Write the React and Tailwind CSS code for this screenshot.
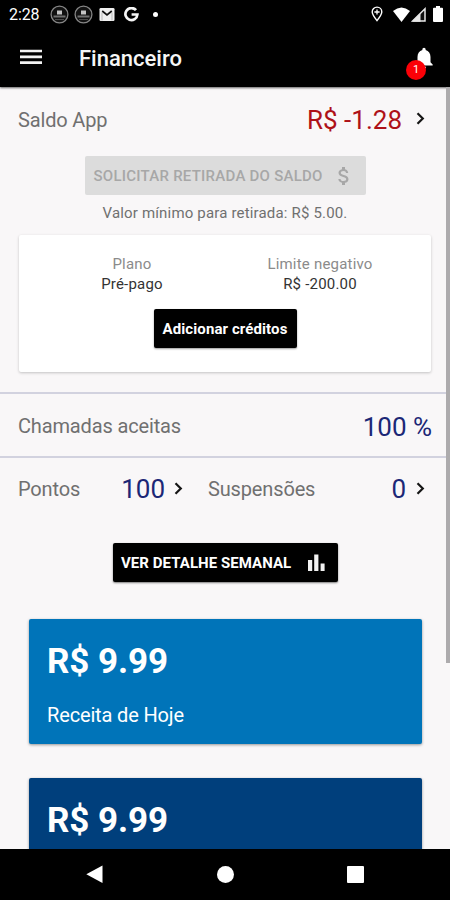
import React from 'react';
import { MdNotifications, MdAttachMoney } from 'react-icons/md';

const earnings = [
    { value: 'R$ 9.99', label: 'Receita de Hoje', color: 'bg-[#0074b9]' },
    { value: 'R$ 9.99', color: 'bg-[#003f7c]' },
];

const Chevron = () => (
    <svg className="w-[9px] h-[13px] shrink-0 -mt-[2px]" viewBox="0 0 9 13" fill="none" stroke="#161616" strokeWidth="2.2">
        <path d="M1.5 1.2 L6.8 6.5 L1.5 11.8" />
    </svg>
);

const AppBadge = () => (
    <svg className="w-[19px] h-[19px]" viewBox="0 0 19 19">
        <circle cx="9.5" cy="9.5" r="8.4" fill="#111" stroke="#858585" strokeWidth="1.3" />
        <path d="M7 5.5h5v4H7z" fill="#c4c4c4" />
        <path d="M3.5 10.5h12v2h-12z" fill="#707070" />
        <path d="M5 14.5h9" stroke="#4a4a4a" strokeWidth="1" />
    </svg>
);

const StatusBar = () => (
    <div className="h-7 flex items-center justify-between pl-[9px] pr-[7px] text-white">
        <div className="flex items-center">
            <span className="w-[41px] pt-[1px] text-[16px] leading-7 tracking-[-0.1px]">2:28</span>
            <div className="flex items-center gap-[5px]">
                <AppBadge />
                <AppBadge />
            </div>
            <svg className="ml-[6px] w-[16px] h-[13px]" viewBox="0 0 16 13">
                <rect x="0.5" width="15" height="13" rx="1.3" fill="#f0f0f0" />
                <path d="M3.2 3 L8 7 L12.8 3" fill="none" stroke="#111" strokeWidth="1.7" />
                <path d="M3 4.5v8M13 4.5v8" stroke="#aaa" strokeWidth="0.8" />
            </svg>
            <svg className="ml-[9px] w-[15px] h-[15px]" viewBox="0 0 15 15" fill="none" stroke="#f5f5f5" strokeWidth="2.7">
                <path d="M12 3.2 A6 6 0 1 0 13.4 7.5 H7.6" />
            </svg>
            <span className="ml-[14px] w-[5px] h-[5px] rounded-full bg-white" />
        </div>
        <div className="flex items-center">
            <svg className="w-[12px] h-[16px]" viewBox="0 0 12 16" fill="none" stroke="#fff">
                <path d="M6 14.6 C3.4 11.2 1.2 8.3 1.2 5.9 a4.8 4.8 0 0 1 9.6 0 C10.8 8.3 8.6 11.2 6 14.6z" strokeWidth="1.4" />
                <path d="M6 3.4v5.2M3.4 6h5.2" strokeWidth="1.3" />
            </svg>
            <svg className="ml-[10px] w-[17px] h-[15px]" viewBox="0 0 17 15" fill="#fff">
                <path d="M0 4 Q8.5 -3 17 4 L8.5 15z" />
            </svg>
            <svg className="ml-[1px] w-[15px] h-[15px]" viewBox="0 0 15 15">
                <path d="M1.6 14 L14 1.8 V14z" fill="#111" stroke="#e8e8e8" strokeWidth="1.5" />
                <path d="M1 14.7 L9.5 6.3 V14.7z" fill="#e8e8e8" />
            </svg>
            <svg className="ml-[7px] w-[10px] h-[16px]" viewBox="0 0 10 16" fill="#fff">
                <path d="M3 0h4v1.7h2a1 1 0 0 1 1 1V15a1 1 0 0 1-1 1H1a1 1 0 0 1-1-1V2.7a1 1 0 0 1 1-1h2z" />
            </svg>
        </div>
    </div>
);

const App = () => {
    return (
        <div className="relative w-[450px] h-[900px] flex flex-col overflow-hidden bg-[#f9f7f8] font-['Roboto',sans-serif] text-[#707070]">
            {/* Header */}
            <header className="h-[87px] shrink-0 bg-black shadow-[0_1px_2px_rgba(0,0,0,0.6)]">
                <StatusBar />
                <div className="h-[59px] flex items-center pl-[20px] pr-[13px]">
                    <svg className="w-[22px] h-[16px] -mt-[2px]" viewBox="0 0 22 16" stroke="#f2f2f2" strokeWidth="2.7">
                        <path d="M0 2h22M0 7.8h22M0 13.6h22" />
                    </svg>
                    <h1 className="ml-[37px] mt-[2px] text-[22px] leading-[26px] font-medium text-[#f6f6f6]">Financeiro</h1>
                    <div className="relative ml-auto">
                        <MdNotifications className="w-[26px] h-[26px] text-white" />
                        <span className="absolute -left-[5px] top-[15px] w-[20px] h-[20px] rounded-full bg-[#fb0007] text-white text-[11px] leading-[20px] text-center">1</span>
                    </div>
                </div>
            </header>

            <main className="flex-1 min-h-0 overflow-hidden">
                {/* Balance */}
                <section className="h-[307px] border-b-2 border-[#d2d2df]">
                    <div className="h-[65px] flex items-center pl-[18px] pr-[25px]">
                        <span className="text-[20px] tracking-[-0.15px]">Saldo App</span>
                        <span className="ml-auto mr-[14px] pt-[2px] text-[26px] text-[#ae1118]">R$ -1.28</span>
                        <Chevron />
                    </div>
                    <div className="flex flex-col items-center">
                        <button className="mt-[4px] w-[281px] h-[39px] flex items-center pl-[9px] pt-[2px] rounded-[2px] bg-[#dcdcdc] text-[#a7a7a7] text-[15px] font-medium tracking-[0.25px]">
                            SOLICITAR RETIRADA DO SALDO
                            <MdAttachMoney className="-mt-[2px] ml-[9px] w-[24px] h-[24px]" />
                        </button>
                        <p className="mt-[8px] text-[15px] leading-[20px] tracking-[0.17px]">Valor mínimo para retirada: R$ 5.00.</p>
                    </div>
                    <div className="mx-[19px] mt-[12px] h-[137px] bg-white rounded-[2px] shadow-[0_1px_3px_rgba(0,0,0,0.22)] flex flex-col items-center">
                        <div className="w-full pt-[19px] pl-[19px] pr-[17px] grid grid-cols-2 text-center text-[15px] leading-[20px] tracking-[0.2px]">
                            <div>
                                <p className="text-[#8b8b8b]">Plano</p>
                                <p className="text-[#333]">Pré-pago</p>
                            </div>
                            <div>
                                <p className="text-[#8b8b8b]">Limite negativo</p>
                                <p className="text-[#333]">R$ -200.00</p>
                            </div>
                        </div>
                        <button className="mt-[15px] w-[143px] h-[39px] pt-[2px] rounded-[2px] bg-black text-white text-[15px] font-bold tracking-[0.1px] whitespace-nowrap shadow-[0_1px_2px_rgba(0,0,0,0.4)]">
                            Adicionar créditos
                        </button>
                    </div>
                </section>

                {/* Accepted calls */}
                <section className="h-[64px] pt-[2px] flex items-center justify-between px-[18px] border-b-2 border-[#d2d2df]">
                    <span className="text-[20px] tracking-[-0.15px]">Chamadas aceitas</span>
                    <span className="pt-[2px] text-[26px] text-[#1c2776]">100 %</span>
                </section>

                {/* Points and suspensions */}
                <section className="h-[63px] pb-[1px] flex items-center pl-[18px] pr-[25px]">
                    <span className="text-[20px] tracking-[-0.15px]">Pontos</span>
                    <span className="ml-auto mr-[9px] pt-[1px] text-[26px] text-[#1c2776]">100</span>
                    <Chevron />
                    <div className="ml-[25px] w-[217px] flex items-center">
                        <span className="text-[20px] tracking-[-0.15px]">Suspensões</span>
                        <span className="ml-auto mr-[10px] pt-[1px] text-[26px] text-[#1c2776]">0</span>
                        <Chevron />
                    </div>
                </section>

                <button className="mt-[22px] ml-[113px] w-[225px] h-[39px] pt-[2px] flex items-center pl-[8px] rounded-[2px] bg-black text-white text-[15px] font-bold tracking-[0.05px] whitespace-nowrap shadow-[0_1px_2px_rgba(0,0,0,0.5)]">
                    <span className="w-[187px] text-left">VER DETALHE SEMANAL</span>
                    <svg className="-mt-[2px] w-[17px] h-[17px]" viewBox="0 0 17 17" fill="#f2f2f2">
                        <path d="M0 6h4.2v11H0zM6.2 0.5h4.2v16.5H6.2zM12.6 9.5h4v7.5h-4z" />
                    </svg>
                </button>

                {/* Earnings */}
                <div className="mt-[37px] ml-[29px] w-[393px] flex flex-col gap-[34px]">
                    {earnings.map((item, index) => (
                        <div key={index} className={`${item.color} h-[125px] shrink-0 pl-[18px] pt-[23px] rounded-[2px] text-white shadow-[0_1px_3px_rgba(0,0,0,0.4)]`}>
                            <p className="text-[35px] leading-[40px] font-bold tracking-[-0.1px]">{item.value}</p>
                            {item.label && <p className="mt-[21px] text-[20px] leading-[24px] tracking-[-0.15px]">{item.label}</p>}
                        </div>
                    ))}
                </div>
            </main>

            {/* Android navigation */}
            <nav className="relative h-[51px] shrink-0 bg-black flex items-center justify-between pl-[86px] pr-[86px]">
                <svg className="w-[17px] h-[19px]" viewBox="0 0 17 19" fill="#fff">
                    <path d="M16.5 0.5v17.5L0.3 9.2z" />
                </svg>
                <span className="w-[17px] h-[17px] rounded-full bg-white" />
                <span className="w-[17px] h-[17px] rounded-[1px] bg-white" />
            </nav>

            {/* Scrollbar thumb */}
            <div className="absolute right-0 top-[87px] w-[4px] h-[576px] bg-[#adabad]" />
        </div>
    );
};

export default App;
